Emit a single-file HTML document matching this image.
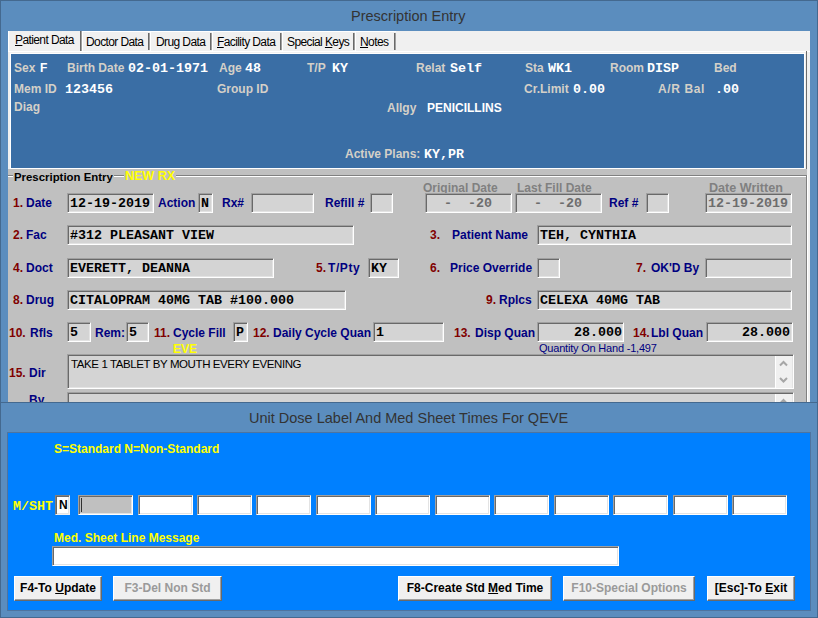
<!DOCTYPE html>
<html><head><meta charset="utf-8">
<style>
*{margin:0;padding:0;box-sizing:border-box}
html,body{width:818px;height:618px;overflow:hidden;background:#5b8dbe;font-family:"Liberation Sans",sans-serif}
.a{position:absolute;white-space:nowrap}
#win{position:absolute;left:0;top:0;width:818px;height:618px;border:1px solid #44698f;background:#5b8dbe}
.ttl{position:absolute;margin-top:1px;font-size:14.5px;color:#333;line-height:17px}
.tabstrip{position:absolute;left:8px;top:31px;width:802px;height:371px;background:#f0f0f0}
.tab{position:absolute;top:31px;height:20px;font-size:12px;letter-spacing:-0.6px;color:#000;line-height:13px}
.sep{position:absolute;top:33px;width:2px;height:17px;background:linear-gradient(90deg,#696969 50%,#a0a0a0 50%)}
.sepw{position:absolute;top:32px;width:1px;height:19px;background:#fff}
.bp{position:absolute;left:11px;top:54px;width:793px;height:114px;background:#3a6ea5}
.lb{position:absolute;font-size:12px;font-weight:bold;color:#d4d0c8;line-height:14px;white-space:nowrap}
.vw{position:absolute;margin-top:1px;font-family:"Liberation Mono",monospace;font-size:13.33px;font-weight:bold;color:#fff;line-height:14px;white-space:nowrap}
.vs{position:absolute;font-size:12px;font-weight:bold;color:#fff;line-height:14px;white-space:nowrap}
.form{position:absolute;left:8px;top:169px;width:799px;height:233px;background:#c0c0c0}
.nl{position:absolute;font-size:12px;font-weight:bold;color:#000080;line-height:14px;white-space:nowrap}
.rl{position:absolute;font-size:12px;font-weight:bold;color:#800000;line-height:14px;white-space:nowrap}
.in{position:absolute;height:20px;background:#d4d4d4;border-top:1px solid #a0a0a0;border-left:1px solid #a0a0a0;border-bottom:1px solid #fff;border-right:1px solid #fff;box-shadow:inset 1px 1px 0 #696969,inset -1px -1px 0 #e3e3e3;
 font-family:"Liberation Mono",monospace;font-size:13.33px;font-weight:bold;color:#000;line-height:17px;padding-left:2px;padding-top:1px;white-space:nowrap;overflow:hidden}
.dis{position:absolute;font-size:12px;font-weight:bold;color:#808080;line-height:14px;white-space:nowrap}
#dlg{position:absolute;left:0;top:402px;width:818px;height:216px;border:1px solid #44698f;background:#5b8dbe}
.cl{position:absolute;left:8px;top:433px;width:802px;height:177px;background:#0080ff}
.yl{position:absolute;margin-top:1px;font-size:12px;font-weight:bold;color:#ffff00;line-height:14px;white-space:nowrap}
.wb{position:absolute;top:495px;width:55px;height:20px;background:#fff;border-top:1px solid #a0a0a0;border-left:1px solid #a0a0a0;border-bottom:1px solid #fff;border-right:1px solid #fff;box-shadow:inset 1px 1px 0 #696969,inset -1px -1px 0 #e3e3e3}
.btn{position:absolute;top:576px;height:25px;background:#f0f0f0;border-top:1px solid #fff;border-left:1px solid #fff;border-right:1px solid #696969;border-bottom:1px solid #696969;box-shadow:inset -1px -1px 0 #a0a0a0;
 font-size:12px;font-weight:bold;color:#000;text-align:center;line-height:22px;white-space:nowrap}
.btn.d{color:#9a9a9a}
u{text-decoration:underline}
</style></head><body>
<div id="win"></div>
<div class="ttl" style="left:351px;top:7px">Prescription Entry</div>

<div class="tabstrip"></div>
<div class="a" style="left:8px;top:51px;width:802px;height:1px;background:#fff"></div>
<div class="tab" style="left:15px;top:34px"><u>P</u>atient Data</div>
<div class="a" style="left:82px;top:31px;width:314px;height:1px;background:#fff"></div>
<div class="a" style="left:8px;top:31px;width:1px;height:20px;background:#fff"></div>
<div class="sep" style="left:80px;top:31px;height:20px"></div><div class="sepw" style="left:82px"></div>
<div class="tab" style="left:86px;top:36px">Doctor Data</div>
<div class="sep" style="left:148px"></div><div class="sepw" style="left:150px"></div>
<div class="tab" style="left:156px;top:36px">Drug Data</div>
<div class="sep" style="left:210px"></div><div class="sepw" style="left:212px"></div>
<div class="tab" style="left:217px;top:36px"><u>F</u>acility Data</div>
<div class="sep" style="left:280px"></div><div class="sepw" style="left:282px"></div>
<div class="tab" style="left:287px;top:36px">Special <u>K</u>eys</div>
<div class="sep" style="left:353px"></div><div class="sepw" style="left:355px"></div>
<div class="tab" style="left:360px;top:36px"><u>N</u>otes</div>
<div class="sep" style="left:394px"></div>

<div class="a" style="left:10px;top:53px;width:795px;height:116px;background:#fff"></div>
<div class="bp"></div>
<div class="a" style="left:806px;top:51px;width:1px;height:119px;background:#6d6d6d"></div>

<div class="lb" style="left:14px;top:61px">Sex</div><div class="vs" style="left:40px;top:61px">F</div>
<div class="lb" style="left:67px;top:61px">Birth Date</div><div class="vw" style="left:128px;top:61px">02-01-1971</div>
<div class="lb" style="left:219px;top:61px">Age</div><div class="vw" style="left:245px;top:61px">48</div>
<div class="lb" style="left:307px;top:61px">T/P</div><div class="vw" style="left:332px;top:61px">KY</div>
<div class="lb" style="left:416px;top:61px">Relat</div><div class="vw" style="left:450px;top:61px">Self</div>
<div class="lb" style="left:525px;top:61px">Sta</div><div class="vw" style="left:548px;top:61px">WK1</div>
<div class="lb" style="left:610px;top:61px">Room</div><div class="vw" style="left:647px;top:61px">DISP</div>
<div class="lb" style="left:714px;top:61px">Bed</div>

<div class="lb" style="left:14px;top:82px">Mem ID</div><div class="vw" style="left:65px;top:82px">123456</div>
<div class="lb" style="left:217px;top:82px">Group ID</div>
<div class="lb" style="left:524px;top:82px">Cr.Limit</div><div class="vw" style="left:573px;top:82px">0.00</div>
<div class="lb" style="left:658px;top:82px;letter-spacing:0.6px">A/R Bal</div><div class="vw" style="left:715px;top:82px">.00</div>

<div class="lb" style="left:14px;top:100px">Diag</div>
<div class="lb" style="left:387px;top:101px">Allgy</div><div class="vs" style="left:427px;top:101px">PENICILLINS</div>
<div class="lb" style="left:345px;top:147px">Active Plans:</div><div class="vw" style="left:424px;top:147px">KY,PR</div>

<div class="form"></div>
<!-- group box -->
<div class="a" style="left:8px;top:175px;width:799px;height:1px;background:#808080"></div>
<div class="a" style="left:8px;top:176px;width:799px;height:1px;background:#fff"></div>
<div class="a" style="left:806px;top:175px;width:1px;height:227px;background:#808080"></div>
<div class="a" style="left:807px;top:175px;width:1px;height:227px;background:#fff"></div>
<div class="a" style="left:13px;top:169px;width:101px;height:14px;background:#c0c0c0"></div>
<div class="nl" style="left:14px;top:170px;color:#000;font-size:11.4px">Prescription Entry</div>
<div class="a" style="left:124px;top:169px;width:52px;height:14px;background:#c0c0c0"></div>
<div class="yl" style="left:125px;top:168px;font-size:12.5px">NEW RX</div>

<!-- row 1 -->
<div class="dis" style="left:423px;top:181px">Original Date</div>
<div class="dis" style="left:517px;top:181px">Last Fill Date</div>
<div class="dis" style="left:709px;top:181px;font-size:12.6px">Date Written</div>
<div class="rl" style="left:13px;top:196px">1.</div><div class="nl" style="left:26px;top:196px">Date</div>
<div class="in" style="left:67px;top:193px;width:87px">12-19-2019</div>
<div class="nl" style="left:158px;top:196px">Action</div>
<div class="in" style="left:198px;top:193px;width:15px">N</div>
<div class="nl" style="left:222px;top:196px">Rx#</div>
<div class="in" style="left:251px;top:193px;width:63px"></div>
<div class="nl" style="left:325px;top:196px">Refill #</div>
<div class="in" style="left:370px;top:193px;width:23px"></div>
<div class="in" style="left:425px;top:193px;width:87px;color:#6d6d6d">&nbsp;&nbsp;-&nbsp;&nbsp;-20</div>
<div class="in" style="left:515px;top:193px;width:87px;color:#6d6d6d">&nbsp;&nbsp;-&nbsp;&nbsp;-20</div>
<div class="nl" style="left:609px;top:196px">Ref #</div>
<div class="in" style="left:646px;top:193px;width:23px"></div>
<div class="in" style="left:705px;top:193px;width:87px;color:#6d6d6d">12-19-2019</div>

<!-- row 2 -->
<div class="rl" style="left:13px;top:228px">2.</div><div class="nl" style="left:26px;top:228px">Fac</div>
<div class="in" style="left:67px;top:225px;width:287px">#312 PLEASANT VIEW</div>
<div class="rl" style="left:430px;top:228px">3.</div><div class="nl" style="left:452px;top:228px">Patient Name</div>
<div class="in" style="left:537px;top:225px;width:255px">TEH, CYNTHIA</div>

<!-- row 3 -->
<div class="rl" style="left:13px;top:261px">4.</div><div class="nl" style="left:26px;top:261px">Doct</div>
<div class="in" style="left:67px;top:258px;width:207px">EVERETT, DEANNA</div>
<div class="rl" style="left:316px;top:261px">5.</div><div class="nl" style="left:328px;top:261px;letter-spacing:0.6px">T/Pty</div>
<div class="in" style="left:368px;top:258px;width:31px">KY</div>
<div class="rl" style="left:430px;top:261px">6.</div><div class="nl" style="left:450px;top:261px">Price Override</div>
<div class="in" style="left:537px;top:258px;width:23px"></div>
<div class="rl" style="left:636px;top:261px">7.</div><div class="nl" style="left:651px;top:261px">OK'D By</div>
<div class="in" style="left:705px;top:258px;width:87px"></div>

<!-- row 4 -->
<div class="rl" style="left:13px;top:293px">8.</div><div class="nl" style="left:26px;top:293px">Drug</div>
<div class="in" style="left:67px;top:290px;width:279px">CITALOPRAM 40MG TAB #100.000</div>
<div class="rl" style="left:486px;top:293px">9.</div><div class="nl" style="left:499px;top:293px">Rplcs</div>
<div class="in" style="left:537px;top:290px;width:255px">CELEXA 40MG TAB</div>

<!-- row 5 -->
<div class="rl" style="left:9px;top:326px">10.</div><div class="nl" style="left:30px;top:326px">Rfls</div>
<div class="in" style="left:67px;top:322px;width:24px">5</div>
<div class="nl" style="left:95px;top:326px">Rem:</div>
<div class="in" style="left:126px;top:322px;width:23px">5</div>
<div class="rl" style="left:154px;top:326px">11.</div><div class="nl" style="left:173px;top:326px">Cycle Fill</div>
<div class="in" style="left:233px;top:322px;width:15px;padding-left:2px">P</div>
<div class="rl" style="left:253px;top:326px">12.</div><div class="nl" style="left:273px;top:326px">Daily Cycle Quan</div>
<div class="in" style="left:373px;top:322px;width:71px">1</div>
<div class="rl" style="left:454px;top:326px">13.</div><div class="nl" style="left:475px;top:326px">Disp Quan</div>
<div class="in" style="left:537px;top:322px;width:87px;text-align:right;padding-right:1px">28.000</div>
<div class="rl" style="left:633px;top:326px">14.</div><div class="nl" style="left:651px;top:326px">Lbl Quan</div>
<div class="in" style="left:706px;top:322px;width:87px;text-align:right;padding-right:2px">28.000</div>
<div class="yl" style="left:173px;top:341px">EVE</div>
<div class="a" style="left:539px;top:342px;font-size:11px;letter-spacing:-0.2px;color:#000080;line-height:13px">Quantity On Hand -1,497</div>

<!-- row 6 -->
<div class="rl" style="left:9px;top:366px">15.</div><div class="nl" style="left:29px;top:366px">Dir</div>
<div class="in" style="left:67px;top:354px;width:727px;height:35px;font-family:'Liberation Sans',sans-serif;font-weight:normal;font-size:11.5px;letter-spacing:-0.4px;padding-left:3px;padding-top:3px;line-height:13px">TAKE 1 TABLET BY MOUTH EVERY EVENING</div>
<div class="a" style="left:775px;top:356px;width:17px;height:32px;background:#f0f0f0;border-left:1px solid #fff"></div>
<svg class="a" style="left:775px;top:356px" width="17" height="32"><polyline points="5,9.5 8.5,6 12,9.5" fill="none" stroke="#a6a6a6" stroke-width="2"/><polyline points="5,22 8.5,25.5 12,22" fill="none" stroke="#a6a6a6" stroke-width="2"/></svg>
<div class="nl" style="left:29px;top:393px">By</div>
<div class="in" style="left:67px;top:392px;width:727px;height:34px"></div>
<div class="a" style="left:775px;top:394px;width:17px;height:10px;background:#f0f0f0;border-left:1px solid #fff"></div>
<svg class="a" style="left:775px;top:394px" width="17" height="8"><polyline points="5,9.5 8.5,6 12,9.5" fill="none" stroke="#a6a6a6" stroke-width="2"/></svg>

<!-- dialog -->
<div id="dlg"></div>
<div class="ttl" style="left:249px;top:409px">Unit Dose Label And Med Sheet Times For QEVE</div>
<div class="a" style="left:7px;top:432px;width:804px;height:179px;background:#4d74a0"></div>
<div class="cl"></div>
<div class="yl" style="left:54px;top:441px">S=Standard N=Non-Standard</div>
<div class="yl" style="left:13px;top:499px;font-family:'Liberation Mono',monospace;font-size:13.33px">M/SHT</div>
<div class="wb" style="left:55px;width:15px;border-top:1px solid #808080;border-left:1px solid #808080;border-right:1px solid #f0f0f0;border-bottom:1px solid #f0f0f0;font-size:12px;font-weight:bold;line-height:19px;padding-left:3px">N</div>
<div class="wb" style="left:78px;background:#c0c0c0"></div>
<div class="a" style="left:81px;top:498px;width:1px;height:14px;background:#303030"></div>
<div class="wb" style="left:138px"></div>
<div class="wb" style="left:197px"></div>
<div class="wb" style="left:256px"></div>
<div class="wb" style="left:316px"></div>
<div class="wb" style="left:375px"></div>
<div class="wb" style="left:435px"></div>
<div class="wb" style="left:494px"></div>
<div class="wb" style="left:554px"></div>
<div class="wb" style="left:613px"></div>
<div class="wb" style="left:673px"></div>
<div class="wb" style="left:732px"></div>
<div class="yl" style="left:54px;top:530px">Med. Sheet Line Message</div>
<div class="wb" style="left:52px;top:546px;width:567px;height:20px"></div>
<div class="btn" style="left:14px;width:88px">F4-To <u>U</u>pdate</div>
<div class="btn d" style="left:113px;width:109px">F3-Del Non Std</div>
<div class="btn" style="left:398px;width:154px">F8-Create Std <u>M</u>ed Time</div>
<div class="btn d" style="left:563px;width:132px">F10-Special Options</div>
<div class="btn" style="left:707px;width:88px">[Esc]-To <u>E</u>xit</div>

</body></html>
